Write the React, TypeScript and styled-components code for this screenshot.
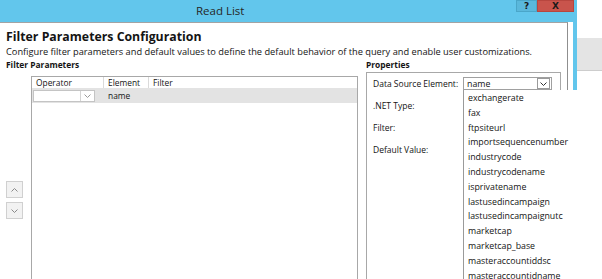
import React from 'react';
import styled, { createGlobalStyle } from 'styled-components';

const GlobalStyle = createGlobalStyle`
  html, body {
    margin: 0;
    padding: 0;
    background: #ffffff;
  }
  body {
    width: 602px;
    height: 279px;
    overflow: hidden;
    font-family: 'Open Sans', 'Noto Sans', sans-serif;
    color: #141414;
  }
`;

const Screen = styled.div`
  display: flex;
  width: 602px;
  height: 279px;
  overflow: hidden;
`;

const Dialog = styled.div`
  width: 577px;
  flex-shrink: 0;
  display: flex;
  flex-direction: column;
  background: #62c6ec;
`;

const TitleBar = styled.div`
  height: 22px;
  flex-shrink: 0;
  display: flex;
  align-items: flex-start;
  padding-right: 3px;
`;

const Title = styled.div`
  flex: 1;
  padding-left: 196px;
  font-size: 11.5px;
  line-height: 22px;
  color: #262626;
`;

const CaptionButton = styled.div<{ $close?: boolean }>`
  width: ${(p) => (p.$close ? 37 : 21)}px;
  height: 12px;
  display: flex;
  align-items: center;
  justify-content: center;
  box-sizing: border-box;
  background: ${(p) => (p.$close ? '#c9544c' : '#5ab8dc')};
  border: 1px solid ${(p) => (p.$close ? '#b8463f' : '#4aa6c9')};
  font-family: 'DejaVu Sans', sans-serif;
  font-weight: bold;
  font-size: 9px;
  color: #1a1a1a;
`;

const Body = styled.div`
  flex: 1;
  display: flex;
  background: #ffffff;
  margin-right: 4px;
  padding-right: 5px;
  min-height: 0;
`;

const Panel = styled.div`
  flex: 1;
  border-top: 1px solid #a3a3a3;
  border-right: 1px solid #8f8f8f;
  padding: 5px 0 0 6px;
  display: flex;
  flex-direction: column;
  min-height: 0;
`;

const Heading = styled.div`
  font-size: 12.3px;
  font-weight: 700;
  line-height: 17px;
`;

const Description = styled.div`
  font-size: 9.25px;
  line-height: 13px;
  white-space: nowrap;
`;

const Sections = styled.div`
  flex: 1;
  display: flex;
  gap: 8px;
  min-height: 0;
`;

const LeftSection = styled.div`
  width: 352px;
  display: flex;
  flex-direction: column;
`;

const RightSection = styled.div`
  width: 195px;
  display: flex;
  flex-direction: column;
`;

const SectionLabel = styled.div`
  font-size: 8.4px;
  font-weight: 700;
  line-height: 14px;
`;

const TableArea = styled.div`
  flex: 1;
  display: flex;
  margin-top: 4px;
`;

const ArrowColumn = styled.div`
  width: 25px;
  display: flex;
  flex-direction: column;
  gap: 4px;
  padding-top: 105px;
`;

const ArrowButton = styled.div`
  width: 17px;
  height: 17px;
  box-sizing: border-box;
  border: 1px solid #d0d0d0;
  background: #f2f2f2;
  display: flex;
  align-items: center;
  justify-content: center;
`;

const Table = styled.div`
  flex: 1;
  border: 1px solid #a8a8a8;
  border-bottom: none;
  background: #ffffff;
`;

const GridRow = styled.div<{ $selected?: boolean }>`
  display: grid;
  grid-template-columns: 72px 45px 1fr;
  height: ${(p) => (p.$selected ? 15 : 11)}px;
  background: ${(p) => (p.$selected ? '#e3e3e3' : '#ffffff')};
  align-items: center;
`;

const HeaderCell = styled.div<{ $last?: boolean }>`
  height: 100%;
  box-sizing: border-box;
  padding-left: 4px;
  border-right: ${(p) => (p.$last ? 'none' : '1px solid #dadada')};
  font-size: 8.4px;
  line-height: 11px;
`;

const Cell = styled.div`
  padding-left: 4px;
  font-size: 8.4px;
  line-height: 15px;
`;

const OperatorCombo = styled.div`
  margin-left: 1px;
  width: 62px;
  height: 12px;
  box-sizing: border-box;
  border: 1px solid #c4c4c4;
  background: #ffffff;
  display: flex;
  justify-content: flex-end;
`;

const ComboArrow = styled.div`
  width: 14px;
  height: 100%;
  box-sizing: border-box;
  border-left: 1px solid #d4d4d4;
  display: flex;
  align-items: center;
  justify-content: center;
`;

const PropertiesBox = styled.div`
  flex: 1;
  border: 1px solid #a8a8a8;
  border-bottom: none;
  padding: 4px 6px;
  display: grid;
  grid-template-columns: 90px 89px;
  grid-auto-rows: 13px;
  row-gap: 9px;
  align-content: start;
  align-items: center;
`;

const PropLabel = styled.div`
  font-size: 8.5px;
  line-height: 13px;
  white-space: nowrap;
`;

const ComboWrap = styled.div`
  position: relative;
  height: 13px;
`;

const ValueCombo = styled.div`
  height: 13px;
  box-sizing: border-box;
  border: 1px solid #a0a0a0;
  background: #ffffff;
  display: flex;
  align-items: center;
  padding-left: 3px;
  font-size: 8.8px;
`;

const ComboText = styled.span`
  flex: 1;
`;

const ValueArrow = styled.div`
  width: 13px;
  height: 11px;
  box-sizing: border-box;
  border: 1px solid #9a9a9a;
  margin-right: 1px;
  display: flex;
  align-items: center;
  justify-content: center;
`;

const DropList = styled.div`
  position: absolute;
  top: 100%;
  left: 0;
  width: 150px;
  height: 200px;
  box-sizing: border-box;
  background: #ffffff;
  border-left: 1px solid #9a9a9a;
  padding: 1px 0 0 4px;
  z-index: 2;
`;

const DropItem = styled.div`
  font-size: 8.8px;
  line-height: 14.8px;
  white-space: nowrap;
`;

const Outside = styled.div`
  flex: 1;
  display: flex;
  flex-direction: column;
`;

const OutsideBand = styled.div`
  margin-top: 38px;
  height: 32px;
  background: #e4e4e4;
  border-bottom: 1px solid #cdcdcd;
`;

const Chevron = ({ up, color = '#555' }: { up?: boolean; color?: string }) => (
  <svg width="7" height="4" viewBox="0 0 7 4">
    <polyline
      points={up ? '0.5,3.5 3.5,0.5 6.5,3.5' : '0.5,0.5 3.5,3.5 6.5,0.5'}
      fill="none"
      stroke={color}
      strokeWidth="1"
    />
  </svg>
);

const listItems = [
  'exchangerate',
  'fax',
  'ftpsiteurl',
  'importsequencenumber',
  'industrycode',
  'industrycodename',
  'isprivatename',
  'lastusedincampaign',
  'lastusedincampaignutc',
  'marketcap',
  'marketcap_base',
  'masteraccountiddsc',
  'masteraccountidname',
];

export default function App() {
  return (
    <Screen>
      <GlobalStyle />
      <Dialog>
        <TitleBar>
          <Title>Read List</Title>
          <CaptionButton>?</CaptionButton>
          <CaptionButton $close>X</CaptionButton>
        </TitleBar>
        <Body>
          <Panel>
            <Heading>Filter Parameters Configuration</Heading>
            <Description>
              Configure filter parameters and default values to define the default behavior of the query and enable user customizations.
            </Description>
            <Sections>
              {/* filter grid */}
              <LeftSection>
                <SectionLabel>Filter Parameters</SectionLabel>
                <TableArea>
                  <ArrowColumn>
                    <ArrowButton>
                      <Chevron up color="#8a8a8a" />
                    </ArrowButton>
                    <ArrowButton>
                      <Chevron color="#8a8a8a" />
                    </ArrowButton>
                  </ArrowColumn>
                  <Table>
                    <GridRow>
                      <HeaderCell>Operator</HeaderCell>
                      <HeaderCell>Element</HeaderCell>
                      <HeaderCell $last>Filter</HeaderCell>
                    </GridRow>
                    <GridRow $selected>
                      <OperatorCombo>
                        <ComboArrow>
                          <Chevron color="#9a9a9a" />
                        </ComboArrow>
                      </OperatorCombo>
                      <Cell>name</Cell>
                      <Cell />
                    </GridRow>
                  </Table>
                </TableArea>
              </LeftSection>

              {/* properties */}
              <RightSection>
                <SectionLabel>Properties</SectionLabel>
                <PropertiesBox>
                  <PropLabel>Data Source Element:</PropLabel>
                  <ComboWrap>
                    <ValueCombo>
                      <ComboText>name</ComboText>
                      <ValueArrow>
                        <Chevron color="#333" />
                      </ValueArrow>
                    </ValueCombo>
                    <DropList>
                      {listItems.map((item) => (
                        <DropItem key={item}>{item}</DropItem>
                      ))}
                    </DropList>
                  </ComboWrap>
                  <PropLabel>.NET Type:</PropLabel>
                  <div />
                  <PropLabel>Filter:</PropLabel>
                  <div />
                  <PropLabel>Default Value:</PropLabel>
                  <div />
                </PropertiesBox>
              </RightSection>
            </Sections>
          </Panel>
        </Body>
      </Dialog>
      <Outside>
        <OutsideBand />
      </Outside>
    </Screen>
  );
}
